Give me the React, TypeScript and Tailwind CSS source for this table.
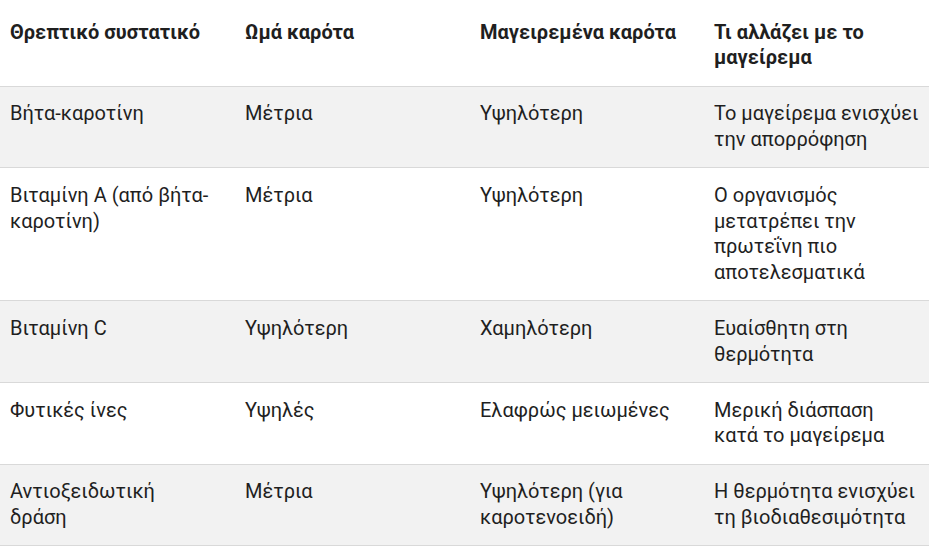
const rows: [string, string, string, string][] = [
  ['Βήτα-καροτίνη', 'Μέτρια', 'Υψηλότερη', 'Το μαγείρεμα ενισχύει την απορρόφηση'],
  ['Βιταμίνη Α (από βήτα-καροτίνη)', 'Μέτρια', 'Υψηλότερη', 'Ο οργανισμός μετατρέπει την πρωτεΐνη πιο αποτελεσματικά'],
  ['Βιταμίνη C', 'Υψηλότερη', 'Χαμηλότερη', 'Ευαίσθητη στη θερμότητα'],
  ['Φυτικές ίνες', 'Υψηλές', 'Ελαφρώς μειωμένες', 'Μερική διάσπαση κατά το μαγείρεμα'],
  ['Αντιοξειδωτική δράση', 'Μέτρια', 'Υψηλότερη (για καροτενοειδή)', 'Η θερμότητα ενισχύει τη βιοδιαθεσιμότητα'],
];

const headers = ['Θρεπτικό συστατικό', 'Ωμά καρότα', 'Μαγειρεμένα καρότα', 'Τι αλλάζει με το μαγείρεμα'];

export default function App() {
  return (
    <div className="w-[929px] h-[546px] overflow-hidden bg-white text-[#1f1f1f] font-['Roboto','Noto_Sans',sans-serif]">
      <table className="table-fixed w-[944px] border-collapse text-left text-[20px] leading-[25.6px]">
        <colgroup>
          <col className="w-[235px]" />
          <col className="w-[235px]" />
          <col className="w-[234px]" />
          <col className="w-[240px]" />
        </colgroup>
        <thead>
          <tr className="border-b border-[#d9d9d9]">
            {headers.map((h) => (
              <th key={h} className="pl-[10px] pr-[24px] pt-[19.5px] pb-[15px] align-top font-bold">
                {h}
              </th>
            ))}
          </tr>
        </thead>
        <tbody>
          {rows.map((r, i) => (
            <tr key={i} className={`border-b border-[#d9d9d9] ${i % 2 === 0 ? 'bg-[#f2f2f2]' : 'bg-white'}`}>
              {r.map((c, j) => (
                <td key={j} className="pl-[10px] pr-[24px] py-[14.75px] align-top">
                  {c}
                </td>
              ))}
            </tr>
          ))}
        </tbody>
      </table>
    </div>
  );
}
